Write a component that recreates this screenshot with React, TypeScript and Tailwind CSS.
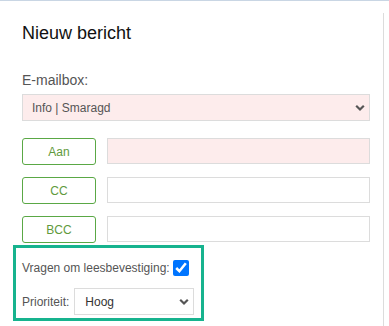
import React, { useState } from "react";

const RECIPIENTS = [
  { label: "Aan", required: true },
  { label: "CC", required: false },
  { label: "BCC", required: false },
];

function Chevron() {
  return (
    <svg width="10" height="7" viewBox="0 0 10 7" className="pointer-events-none absolute right-[5px] top-1/2 -translate-y-1/2">
      <path d="M1.2 1.2 L5 5 L8.8 1.2" fill="none" stroke="#555" strokeWidth="2.2" />
    </svg>
  );
}

export default function App() {
  const [readReceipt, setReadReceipt] = useState(true);
  const [priority, setPriority] = useState("Hoog");

  return (
    <div className="min-h-[326px] w-[389px] bg-white font-['Liberation_Sans',Arial,sans-serif] border-t border-[#c9d6e4]">
      <div className="mt-[12px] h-[313px] w-[384px] border-r border-[#dcdcdc] pl-[22px] pr-[13px]">
        <h1 className="pt-[9px] text-[18px] leading-[22px] text-[#111]">Nieuw bericht</h1>

        <div className="mt-[28px] text-[14px] leading-[16px] text-[#555]">E-mailbox:</div>
        <div className="relative mt-[6px]">
          <select
            defaultValue="info"
            className="h-[27px] w-full appearance-none border border-[#dcdcdc] bg-[#fdecec] pl-[9px] text-[12px] text-[#555] outline-none"
          >
            <option value="info">Info | Smaragd</option>
          </select>
          <Chevron />
        </div>

        <div className="mt-[17px] flex flex-col gap-[12px]">
          {RECIPIENTS.map((r) => (
            <div key={r.label} className="flex items-start gap-[11px]">
              <button className="h-[27px] w-[74px] shrink-0 rounded-[3px] border border-[#5aa845] text-[12px] text-[#5f9a3c]">
                {r.label}
              </button>
              <input
                className={
                  "h-[26px] flex-1 border border-[#dcdcdc] outline-none " +
                  (r.required ? "bg-[#fdecec]" : "bg-white")
                }
              />
            </div>
          ))}
        </div>

        <div className="-ml-[9px] mt-[2px] w-[191px] border-[3px] border-[#17b38e] pb-[3px] pl-[6px] pt-[11px]">
          <label className="flex h-[17px] items-center gap-[3px] whitespace-nowrap text-[12px] text-[#555]">
            Vragen om leesbevestiging:
            <input
              type="checkbox"
              checked={readReceipt}
              onChange={(e) => setReadReceipt(e.target.checked)}
              className="m-0 h-[16px] w-[16px] accent-[#0075ff]"
            />
          </label>
          <div className="mt-[12px] flex items-start gap-[5px]">
            <span className="mt-[6px] text-[12px] leading-[16px] text-[#555]">Prioriteit:</span>
            <div className="relative">
              <select
                value={priority}
                onChange={(e) => setPriority(e.target.value)}
                className="h-[27px] w-[120px] appearance-none border border-[#dcdcdc] bg-white pl-[10px] text-[12px] text-[#333] outline-none"
              >
                <option>Laag</option>
                <option>Normaal</option>
                <option>Hoog</option>
              </select>
              <Chevron />
            </div>
          </div>
        </div>
      </div>
    </div>
  );
}
